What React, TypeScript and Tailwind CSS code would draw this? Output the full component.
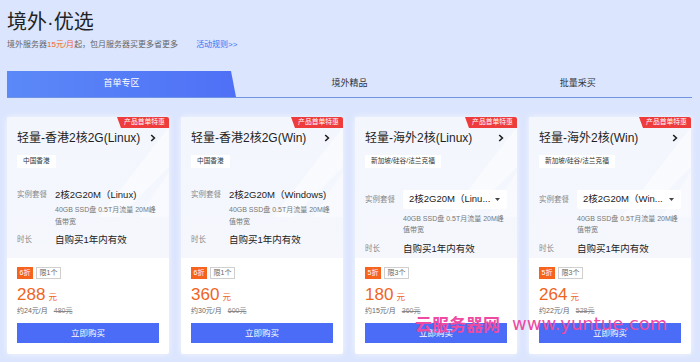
import React from "react";

type Offer = {
  title: string;
  region: string;
  spec: string;
  select: boolean;
  discount: string;
  limit: string;
  price: string;
  monthly: string;
  original: string;
};

const OFFERS: Offer[] = [
  { title: "轻量-香港2核2G(Linux)", region: "中国香港", spec: "2核2G20M（Linux)", select: false, discount: "6折", limit: "限1个", price: "288", monthly: "约24元/月", original: "480元" },
  { title: "轻量-香港2核2G(Win)", region: "中国香港", spec: "2核2G20M（Windows)", select: false, discount: "6折", limit: "限1个", price: "360", monthly: "约30元/月", original: "600元" },
  { title: "轻量-海外2核(Linux)", region: "新加坡/硅谷/法兰克福", spec: "2核2G20M（Linu...", select: true, discount: "5折", limit: "限3个", price: "180", monthly: "约15元/月", original: "360元" },
  { title: "轻量-海外2核(Win)", region: "新加坡/硅谷/法兰克福", spec: "2核2G20M（Win...", select: true, discount: "5折", limit: "限3个", price: "264", monthly: "约22元/月", original: "528元" },
];

const TABS = ["首单专区", "境外精品", "批量采买"];

function Chevron() {
  return (
    <svg width="6" height="8" viewBox="0 0 6 8" className="shrink-0">
      <path d="M1.2 1 L4.4 4 L1.2 7" fill="none" stroke="#222" strokeWidth="1.6" />
    </svg>
  );
}

function Card({ offer }: { offer: Offer }) {
  return (
    <div className="relative flex h-[237px] w-[162px] flex-col overflow-hidden rounded-[2px] bg-white shadow-[0_0_6px_rgba(255,255,255,0.7)]">
      {/* Top: product info */}
      <div className="relative h-[141px] bg-[linear-gradient(180deg,#f3f6fd,#f5f7fd)] px-[10px] pt-[13px]">
        {/* Background decoration */}
        <svg className="absolute right-0 top-[10px]" width="70" height="90" viewBox="0 0 70 90">
          <polygon points="70,0 70,40 20,90 0,90" fill="#ffffff" opacity="0.45" />
          <polygon points="70,45 70,90 40,90" fill="#ffffff" opacity="0.35" />
        </svg>

        <div className="absolute right-0 top-0 flex h-[11px] w-[52px] items-center justify-center bg-[#ee3b3b] pl-[3px] text-[6.8px] text-white [clip-path:polygon(0_0,100%_0,100%_100%,4px_100%)]">
          产品首单特惠
        </div>

        <div className="relative flex h-[16px] items-center justify-between pr-[3px]">
          <span className="text-[12px] leading-[16px] text-[#1f1f1f]">{offer.title}</span>
          <Chevron />
        </div>
        <div className="relative mt-[4px] inline-flex h-[13px] items-center bg-white px-[6px] text-[6.7px] text-[#333]">
          {offer.region}
        </div>

        {offer.select ? (
          <div className="relative mt-[20px] flex h-[19px] items-center">
            <span className="w-[38px] text-[7.5px] text-[#888]">实例套餐</span>
            <div className="flex h-[19px] w-[104px] items-center justify-between rounded-[2px] bg-white pl-[6px] pr-[7px]">
              <span className="whitespace-nowrap text-[9.5px] text-[#222]">{offer.spec}</span>
              <svg width="5" height="3" viewBox="0 0 5 3" className="shrink-0">
                <polygon points="0,0 5,0 2.5,3" fill="#444" />
              </svg>
            </div>
          </div>
        ) : (
          <div className="relative mt-[18px] flex items-center">
            <span className="w-[38px] text-[7.5px] leading-[14px] text-[#888]">实例套餐</span>
            <span className="text-[9.5px] leading-[14px] text-[#222]">{offer.spec}</span>
          </div>
        )}

        <div
          className={
            offer.select
              ? "relative ml-[38px] mt-[4px] w-[104px] text-[7px] leading-[11px] text-[#777]"
              : "relative ml-[38px] mt-[2px] w-[104px] text-[7px] leading-[12px] text-[#777]"
          }
        >
          40GB SSD盘 0.5T月流量 20M峰值带宽
        </div>

        <div className={offer.select ? "relative mt-[7px] flex items-center" : "relative mt-[5px] flex items-center"}>
          <span className="w-[38px] text-[7.5px] leading-[14px] text-[#888]">时长</span>
          <span className="text-[9.5px] leading-[14px] text-[#222]">自购买1年内有效</span>
        </div>
      </div>

      {/* Bottom: price + buy */}
      <div className="flex flex-1 flex-col px-[10px] pt-[9px]">
        <div className="flex h-[12px] items-stretch gap-[3px]">
          <span className="flex w-[16px] items-center justify-center bg-[#f5631d] text-[7px] text-white">{offer.discount}</span>
          <span className="flex w-[25px] items-center justify-center border border-[#cfcfcf] text-[7px] text-[#666]">{offer.limit}</span>
        </div>
        <div className="mt-[6px] flex h-[20px] items-baseline gap-[3px] text-[#f0641e]">
          <span className="text-[17px] leading-[20px]">{offer.price}</span>
          <span className="text-[8.5px]">元</span>
        </div>
        <div className="mt-[1px] flex h-[10px] items-center gap-[6px] text-[7px] text-[#666]">
          <span>{offer.monthly}</span>
          <span className="text-[#888] line-through">{offer.original}</span>
        </div>
        <button className="mt-[7px] flex h-[20px] w-full items-center justify-center bg-[#4a6cf6] text-[8.5px] text-white">
          立即购买
        </button>
      </div>
    </div>
  );
}

export default function App() {
  return (
    <div className="relative h-[362px] w-[700px] overflow-hidden bg-[#dbe5fd] px-[7px] pt-[10px] font-['Liberation_Sans','Noto_Sans_CJK_SC',sans-serif]">
      {/* Header */}
      <h1 className="text-[20px] leading-[24px] text-[#222]">境外·优选</h1>
      <p className="mt-[5px] flex h-[12px] items-center text-[8px] text-[#666]">
        <span>
          境外服务器<span className="text-[#f0641e]">15元/月</span>起，包月服务器买更多省更多
        </span>
        <span className="ml-[18px] text-[#3d6df2]">活动规则&gt;&gt;</span>
      </p>

      {/* Tabs */}
      <div className="mt-[20px] grid h-[27px] w-[685px] grid-cols-3 border-b border-[#7094e4]">
        {TABS.map((tab, i) =>
          i === 0 ? (
            <div
              key={tab}
              className="flex w-[229px] items-center justify-center bg-[linear-gradient(90deg,#5b89f8,#4f70f6)] text-[9px] text-white [clip-path:polygon(0_0,calc(100%-5px)_0,100%_100%,0_100%)]"
            >
              {tab}
            </div>
          ) : (
            <div key={tab} className="flex items-center justify-center text-[9px] text-[#333]">
              {tab}
            </div>
          )
        )}
      </div>

      {/* Cards */}
      <div className="mt-[19px] flex gap-[12px]">
        {OFFERS.map((offer) => (
          <Card key={offer.title} offer={offer} />
        ))}
      </div>

      {/* Watermark */}
      <div className="absolute left-[415px] top-[314px] flex items-center gap-[12px] text-[#ee4aa2]">
        <span className="text-[17px] font-bold leading-[20px] font-['Noto_Sans_CJK_SC',sans-serif]">云服务器网</span>
        <span className="text-[18px] leading-[20px] font-['DejaVu_Sans',sans-serif]">www.yuntue.com</span>
      </div>
    </div>
  );
}
